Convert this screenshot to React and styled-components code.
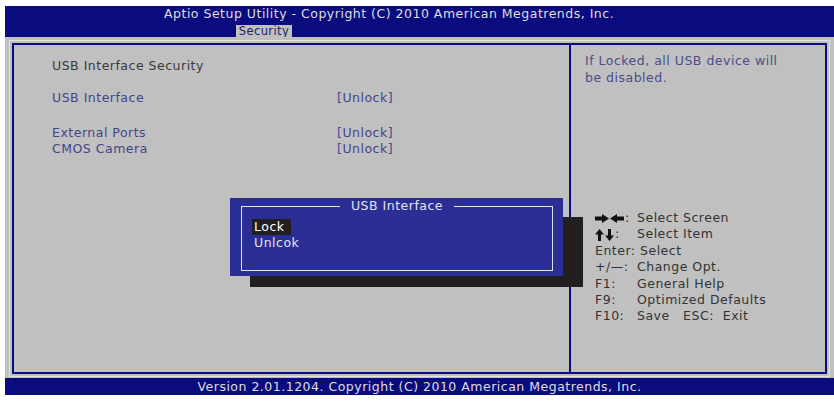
import React from "react";
import styled, { createGlobalStyle } from "styled-components";

const GlobalStyle = createGlobalStyle`
  html, body { margin: 0; padding: 0; background: #ffffff; }
  body { font-family: "DejaVu Sans", "Liberation Sans", sans-serif; }
`;

const NAVY = "#0b0b80";
const GREY = "#c0c0c0";

const Screen = styled.div`
  margin: 6px 0 0 5px;
  width: 829px;
  height: 389px;
  display: flex;
  flex-direction: column;
  font-size: 12.5px;
  letter-spacing: 0.5px;
`;

const Header = styled.div`
  height: 31px;
  background: ${NAVY};
  display: flex;
  flex-direction: column;
`;

const Title = styled.div`
  padding-left: 159px;
  line-height: 16px;
  color: #dedede;
  white-space: nowrap;
`;

const Tab = styled.div`
  margin: 3px 0 0 231px;
  width: 56px;
  height: 12px;
  background: ${GREY};
  color: #23236e;
  line-height: 12px;
  text-align: center;
  font-size: 11.5px;
  letter-spacing: 0.4px;
`;

const Body = styled.div`
  height: 341px;
  box-sizing: border-box;
  background: ${GREY};
  padding: 3px 4px 1px 4px;
  display: flex;
`;

const Bevel = styled.div`
  flex: 1;
  border: 1px solid #e2e2e2;
  padding: 2px;
  display: flex;
`;

const Frame = styled.div`
  position: relative;
  flex: 1;
  border: 2px solid ${NAVY};
  display: flex;
`;

const LeftPanel = styled.div`
  flex: 1;
  padding: 13px 0 0 38px;
  line-height: 16px;
`;

const SectionTitle = styled.div`
  color: #3a3a3a;
  margin-bottom: 16px;
`;

const Row = styled.div`
  display: grid;
  grid-template-columns: 285px auto;
  color: #44448a;
  margin-top: ${(p) => p.$gap || 0}px;
`;

const RightPanel = styled.div`
  width: 254px;
  border-left: 2px solid ${NAVY};
  display: flex;
  flex-direction: column;
`;

const Help = styled.div`
  padding: 7px 0 0 14px;
  line-height: 17px;
  color: #4c4c8a;
`;

const Keys = styled.div`
  margin: 124px 0 0 24px;
  display: grid;
  grid-template-columns: 42px auto;
  line-height: 16.4px;
  color: #333333;
`;

const KeyCell = styled.span`
  display: flex;
  align-items: center;
  gap: 1px;
`;

const Wide = styled.span`
  grid-column: 1 / span 2;
`;

const Shadow = styled.div`
  position: absolute;
  left: 236px;
  top: 172px;
  width: 333px;
  height: 70px;
  background: #231f20;
`;

const Popup = styled.div`
  position: absolute;
  left: 216px;
  top: 153px;
  width: 333px;
  height: 78px;
  box-sizing: border-box;
  background: #2b2e94;
  padding: 8px 10px 5px 11px;
  display: flex;
`;

const PopupFrame = styled.div`
  position: relative;
  flex: 1;
  border: 1.5px solid #e4e4f0;
  padding: 12px 0 0 10px;
  line-height: 16px;
  color: #e4e4f0;
`;

const PopupTitle = styled.div`
  position: absolute;
  top: -9px;
  left: 0;
  right: 0;
  text-align: center;
  line-height: 16px;
`;

const PopupTitleText = styled.span`
  background: #2b2e94;
  padding: 0 11px;
`;

const Option = styled.div`
  display: inline-block;
  padding: 0 6px 0 2px;
  background: ${(p) => (p.$selected ? "#231f20" : "transparent")};
  color: ${(p) => (p.$selected ? "#ffffff" : "#e4e4f0")};
`;

const Footer = styled.div`
  height: 17px;
  background: ${NAVY};
  color: #dedede;
  line-height: 17px;
  text-align: center;
  white-space: nowrap;
`;

const ArrowRight = () => (
  <svg width="14" height="9" viewBox="0 0 14 9">
    <polygon points="0,2.5 7,2.5 7,0 14,4.5 7,9 7,6.5 0,6.5" fill="#111" />
  </svg>
);
const ArrowLeft = () => (
  <svg width="14" height="9" viewBox="0 0 14 9">
    <polygon points="14,2.5 7,2.5 7,0 0,4.5 7,9 7,6.5 14,6.5" fill="#111" />
  </svg>
);
const ArrowUp = () => (
  <svg width="9" height="12" viewBox="0 0 9 12">
    <polygon points="3,12 3,5.5 0,5.5 4.5,0 9,5.5 6,5.5 6,12" fill="#111" />
  </svg>
);
const ArrowDown = () => (
  <svg width="9" height="12" viewBox="0 0 9 12">
    <polygon points="3,0 3,6.5 0,6.5 4.5,12 9,6.5 6,6.5 6,0" fill="#111" />
  </svg>
);

export default function App() {
  return (
    <>
      <GlobalStyle />
      <Screen>
        <Header>
          <Title>Aptio Setup Utility - Copyright (C) 2010 American Megatrends, Inc.</Title>
          <Tab>Security</Tab>
        </Header>
        <Body>
          <Bevel>
            <Frame>
              <LeftPanel>
                <SectionTitle>USB Interface Security</SectionTitle>
                <Row>
                  <span>USB Interface</span>
                  <span>[Unlock]</span>
                </Row>
                <Row $gap={19}>
                  <span>External Ports</span>
                  <span>[Unlock]</span>
                </Row>
                <Row>
                  <span>CMOS Camera</span>
                  <span>[Unlock]</span>
                </Row>
              </LeftPanel>
              <RightPanel>
                <Help>
                  If Locked, all USB device will
                  <br />
                  be disabled.
                </Help>
                <Keys>
                  <KeyCell>
                    <ArrowRight />
                    <ArrowLeft />:
                  </KeyCell>
                  <span>Select Screen</span>
                  <KeyCell>
                    <ArrowUp />
                    <ArrowDown />:
                  </KeyCell>
                  <span>Select Item</span>
                  <Wide>Enter: Select</Wide>
                  <span>+/—:</span>
                  <span>Change Opt.</span>
                  <span>F1:</span>
                  <span>General Help</span>
                  <span>F9:</span>
                  <span>Optimized Defaults</span>
                  <span>F10:</span>
                  <span>Save&nbsp;&nbsp;&nbsp;ESC:&nbsp;&nbsp;Exit</span>
                </Keys>
              </RightPanel>
              <Shadow />
              <Popup>
                <PopupFrame>
                  <PopupTitle>
                    <PopupTitleText>USB Interface</PopupTitleText>
                  </PopupTitle>
                  <div>
                    <Option $selected>Lock</Option>
                  </div>
                  <div>
                    <Option>Unlcok</Option>
                  </div>
                </PopupFrame>
              </Popup>
            </Frame>
          </Bevel>
        </Body>
        <Footer>Version 2.01.1204. Copyright (C) 2010 American Megatrends, Inc.</Footer>
      </Screen>
    </>
  );
}
